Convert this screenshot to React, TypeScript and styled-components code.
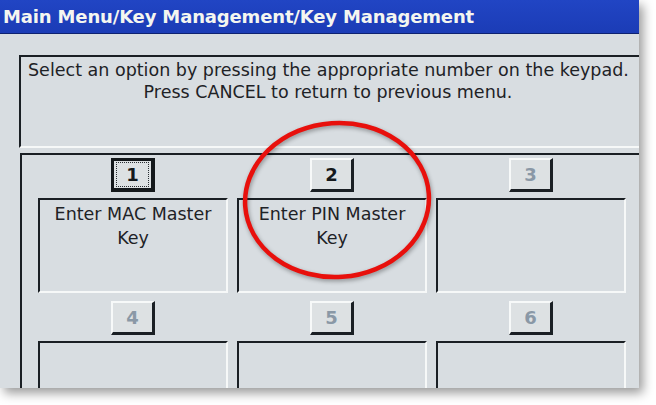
import React from "react";
import styled, { createGlobalStyle } from "styled-components";

const Global = createGlobalStyle`
  html, body { margin: 0; padding: 0; background: #ffffff; }
  #root { width: 656px; height: 405px; }
`;

const Screen = styled.div`
  position: relative;
  width: 639px;
  height: 388px;
  overflow: hidden;
  background: #d8dde1;
  box-shadow: 4px 5px 10px rgba(0, 0, 0, 0.4);
  font-family: "DejaVu Sans", Verdana, sans-serif;
  color: #1e2226;
`;

const TitleBar = styled.div`
  height: 33px;
  background: linear-gradient(#2145c4, #1b3cb6);
  color: #f4f6f0;
  font-weight: bold;
  font-size: 18px;
  line-height: 33px;
  padding-left: 3px;
  white-space: nowrap;
  letter-spacing: -0.15px;
  border-bottom: 1px solid #0d2170;
`;

const Body = styled.div`
  padding: 21px 0 0 19px;
  display: flex;
  flex-direction: column;
  gap: 5px;
`;

const Sunken = styled.div`
  border-top: 2px solid #1a1f24;
  border-left: 2px solid #1a1f24;
  border-bottom: 2px solid #f6f8f8;
  border-right: 2px solid #f6f8f8;
`;

const InfoBox = styled(Sunken)`
  width: 620px;
  box-sizing: border-box;
  height: 93px;
  border-right: none;
  padding: 2px 0 0 7px;
  font-size: 17.5px;
  line-height: 22px;
  white-space: nowrap;
`;

const InfoLine = styled.div`
  width: 600px;
  text-align: center;
`;

const GridBox = styled(Sunken)`
  margin-left: 1px;
  width: 619px;
  height: 260px;
  box-sizing: border-box;
  border-bottom: none;
  border-right: none;
  padding: 3px 0 0 16px;
  display: grid;
  grid-template-columns: repeat(3, 190px);
  column-gap: 9px;
  row-gap: 8px;
  align-content: start;
`;

const Cell = styled.div`
  display: flex;
  flex-direction: column;
  align-items: center;
  gap: 6px;
`;

const KeyButton = styled.div<{ $focused?: boolean; $disabled?: boolean }>`
  width: 44px;
  height: 34px;
  box-sizing: border-box;
  display: flex;
  align-items: center;
  justify-content: center;
  background: #dde1e3;
  font-weight: bold;
  font-size: 18px;
  color: ${(p) => (p.$disabled ? "#8a98a6" : "#15191c")};
  border-top: 2px solid #f7f9f9;
  border-left: 2px solid #f7f9f9;
  border-right: 3px solid #1a1f24;
  border-bottom: 3px solid #1a1f24;
  ${(p) =>
    p.$focused
      ? `border: 3px solid #14181b; border-right-width: 4px; border-bottom-width: 4px;`
      : ""}
`;

const FocusRing = styled.span`
  display: flex;
  align-items: center;
  justify-content: center;
  width: 31px;
  height: 23px;
  border: 1px dotted #2a2f33;
`;

const OptionBox = styled(Sunken)`
  width: 100%;
  box-sizing: border-box;
  height: 95px;
  text-align: center;
  font-size: 17.5px;
  line-height: 24px;
  padding-top: 2px;
`;

const Ring = styled.svg`
  position: absolute;
  left: 236px;
  top: 114px;
  pointer-events: none;
  filter: drop-shadow(1px 2px 2px rgba(0, 0, 0, 0.35));
`;

type Opt = { n: number; label?: string[]; focused?: boolean; disabled?: boolean };

const options: Opt[] = [
  { n: 1, label: ["Enter MAC Master", "Key"], focused: true },
  { n: 2, label: ["Enter PIN Master", "Key"] },
  { n: 3, disabled: true },
  { n: 4, disabled: true },
  { n: 5, disabled: true },
  { n: 6, disabled: true },
];

export default function App() {
  return (
    <>
      <Global />
      <Screen>
        <TitleBar>Main Menu/Key Management/Key Management</TitleBar>
        <Body>
          <InfoBox>
            <InfoLine>Select an option by pressing the appropriate number on the keypad.</InfoLine>
            <InfoLine>Press CANCEL to return to previous menu.</InfoLine>
          </InfoBox>
          <GridBox>
            {options.map((o) => (
              <Cell key={o.n}>
                <KeyButton $focused={o.focused} $disabled={o.disabled}>
                  {o.focused ? <FocusRing>{o.n}</FocusRing> : o.n}
                </KeyButton>
                <OptionBox>
                  {o.label?.map((l, i) => (
                    <div key={i}>{l}</div>
                  ))}
                </OptionBox>
              </Cell>
            ))}
          </GridBox>
        </Body>
        <Ring width="204" height="172" viewBox="0 0 204 172">
          <ellipse cx="101" cy="86" rx="92" ry="77" fill="none" stroke="#e8100c" strokeWidth="4.5" transform="rotate(-4 101 86)" />
        </Ring>
      </Screen>
    </>
  );
}
